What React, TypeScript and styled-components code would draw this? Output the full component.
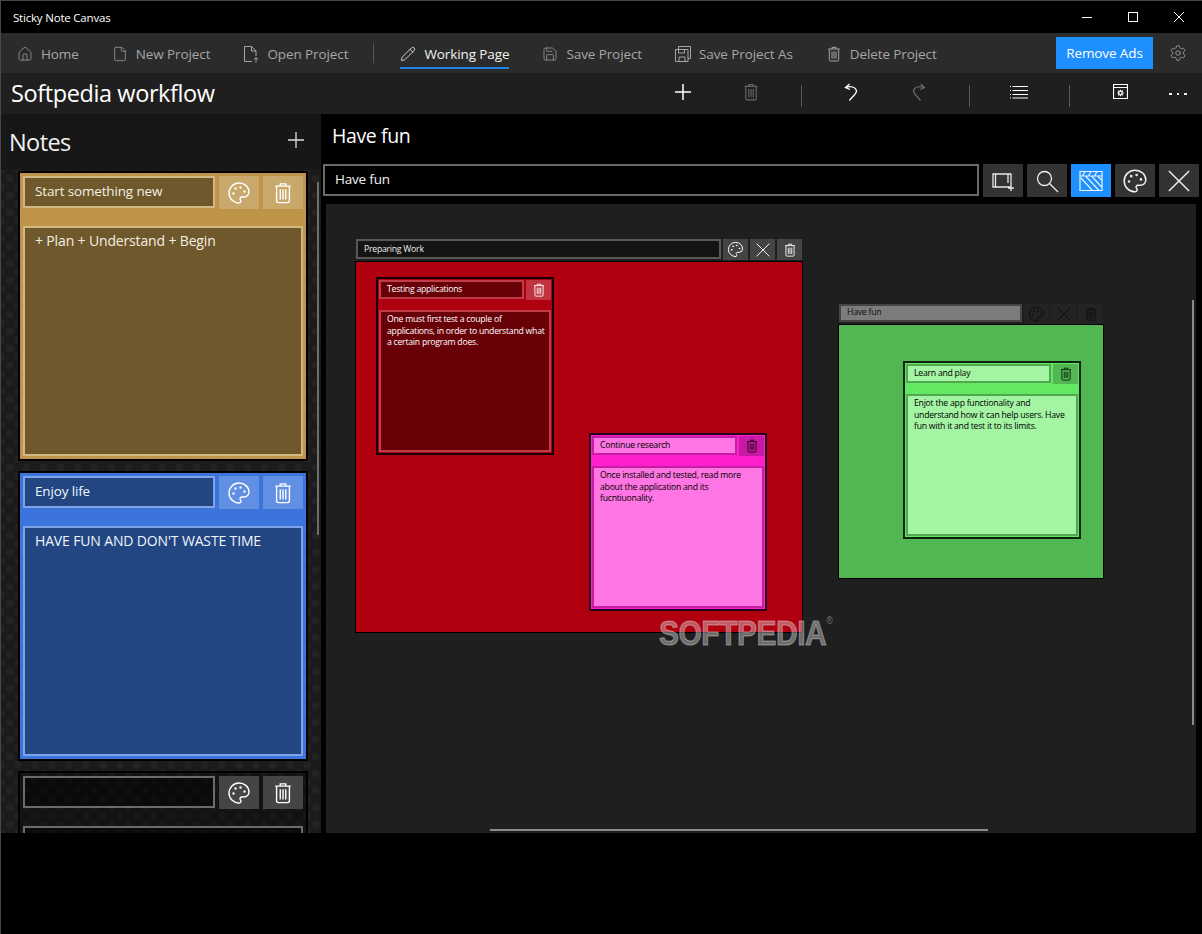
import * as React from 'react'
import styled, { createGlobalStyle } from 'styled-components'
import { Palette, Pencil, Save, Settings, File, Home } from 'lucide-react'

interface Tone {
  card: string
  field: string
  line: string
  button: string
  text: string
  icon: string
}

const TONES: Record<string, Tone> = {
  gold: { card: '#bd9448', field: '#6f582c', line: '#d3b884', button: '#c9a86c', text: '#f4efe4', icon: '#fff' },
  blue: { card: '#3b75db', field: '#224682', line: '#7ea3e8', button: '#608fe3', text: '#f0f4fb', icon: '#fff' },
  empty: { card: 'rgba(0, 0, 0, 0.3)', field: 'rgba(0, 0, 0, 0.4)', line: '#6b6b6b', button: '#454545', text: '#fff', icon: '#fff' },
  red: { card: '#b00010', field: '#680008', line: '#c03c48', button: '#c03440', text: '#fff', icon: '#fff' },
  pink: { card: '#ff1fcb', field: '#ff75e3', line: '#c71da2', button: '#c718a6', text: '#000', icon: '#1c0716' },
  green: { card: '#62e862', field: '#a3f4a3', line: '#52a852', button: '#52b752', text: '#000', icon: '#0a1f0a' },
}

const TrashIcon: React.FC<{ size?: number; color?: string }> = ({ size = 24, color = 'currentColor' }) => (
  <svg width={size} height={size} viewBox="0 0 24 24" fill="none" stroke={color} strokeWidth="1.5">
    <path d="M3.500 4.500h17M9 4.500V2h6v2.500" />
    <path d="M5 4.500V20.500a2 2 0 0 0 2 2h10a2 2 0 0 0 2-2V4.500" />
    <path d="M9 8v11M12 8v11M15 8v11" />
  </svg>
)

const PaletteIcon: React.FC<{ size?: number; color?: string }> = ({ size = 24, color = 'currentColor' }) => (
  <Palette size={size} color={color} strokeWidth={1.4} />
)

const CrossIcon: React.FC<{ size: number }> = ({ size }) => (
  <svg width={size} height={size} viewBox="0 0 24 24" fill="none" stroke="currentColor" strokeWidth="1.600">
    <path d="M1 1l22 22M23 1L1 23" />
  </svg>
)

const Note: React.FC<{ tone: Tone; title?: string; body?: string; small?: boolean; x?: number; y?: number }> = ({
  tone,
  title,
  body,
  small,
  x,
  y,
}) => {
  if (small) {
    return (
      <SmallCard $tone={tone} $x={x} $y={y}>
        <SmallHead>
          <SmallTitle $tone={tone}>{title}</SmallTitle>
          <SmallButton $tone={tone}>
            <TrashIcon size={14} color={tone.icon} />
          </SmallButton>
        </SmallHead>
        <SmallBody $tone={tone}>{body}</SmallBody>
      </SmallCard>
    )
  }
  return (
    <Card $tone={tone}>
      <CardHead>
        <CardTitle $tone={tone}>{title}</CardTitle>
        <CardButton $tone={tone}>
          <PaletteIcon size={24} color={tone.icon} />
        </CardButton>
        <CardButton $tone={tone}>
          <TrashIcon size={22} color={tone.icon} />
        </CardButton>
      </CardHead>
      <CardBody $tone={tone}>{body}</CardBody>
    </Card>
  )
}

const App: React.FC = () => (
  <Page>
    <GlobalStyle />
    <TitleBar>
      <AppName>Sticky Note Canvas</AppName>
      <WindowButtons>
        <WindowButton>
          <svg width="12" height="12" viewBox="0 0 12 12" stroke="#fff" fill="none"><path d="M1 6.500h10" /></svg>
        </WindowButton>
        <WindowButton>
          <svg width="12" height="12" viewBox="0 0 12 12" stroke="#fff" fill="none"><rect x="1.500" y="1.500" width="9" height="9" /></svg>
        </WindowButton>
        <WindowButton>
          <svg width="12" height="12" viewBox="0 0 12 12" stroke="#fff" fill="none"><path d="M1 1l10 10M11 1L1 11" /></svg>
        </WindowButton>
      </WindowButtons>
    </TitleBar>

    <NavBar>
      <NavItem><Home size={16} strokeWidth={1.1} />Home</NavItem>
      <NavItem><File size={16} strokeWidth={1.1} />New Project</NavItem>
      <NavItem>
        <svg width="16" height="18" viewBox="0 0 16 18" fill="none" stroke="currentColor">
          <path d="M9 16.500H1.500v-15h7l4.500 4.500v5M8.500 1.500V6H13M13 17.500v-5M11 14.500l2-2 2 2" />
        </svg>
        Open Project
      </NavItem>
      <NavDivider />
      <NavItem $active><Pencil size={16} strokeWidth={1.2} />Working Page</NavItem>
      <NavItem><Save size={16} strokeWidth={1.1} />Save Project</NavItem>
      <NavItem>
        <svg width="16" height="16" viewBox="0 0 16 16" fill="none" stroke="currentColor">
          <path d="M3.500 3V.500h12v12H13M.500 3.500h12.500v12H.500zM4 15.500V11h6v4.500M3.500 3.500v3.500h6V3.500" />
        </svg>
        Save Project As
      </NavItem>
      <NavItem><TrashIcon size={16} />Delete Project</NavItem>
      <RemoveAds>Remove Ads</RemoveAds>
      <GearButton><Settings size={18} strokeWidth={1.1} /></GearButton>
    </NavBar>

    <CommandBar>
      <ProjectName>Softpedia workflow</ProjectName>
      <CommandCell>
        <svg width="18" height="18" viewBox="0 0 18 18" stroke="#fff" strokeWidth="1.500"><path d="M9 1v16M1 9h16" /></svg>
      </CommandCell>
      <CommandCell $dim><TrashIcon size={18} /></CommandCell>
      <CommandDivider />
      <CommandCell>
        <svg width="14" height="18" viewBox="0 0 14 18" fill="none" stroke="#fff" strokeWidth="1.300">
          <path d="M5.500 1L1.500 4.500l4.500 2M2 4.500C6 2.500 12 4 12.500 8c.3 2.500-4.500 6-7 9.500" />
        </svg>
      </CommandCell>
      <CommandCell $dim>
        <svg width="14" height="18" viewBox="0 0 14 18" fill="none" stroke="currentColor" strokeWidth="1.300">
          <path d="M8.500 1l4 3.500-4.500 2M12 4.500C8 2.500 2 4 1.500 8c-.3 2.500 4.500 6 7 9.500" />
        </svg>
      </CommandCell>
      <CommandDivider />
      <CommandCell>
        <svg width="18" height="14" viewBox="0 0 18 14" fill="none" stroke="#fff">
          <path d="M2.500 1.500H18M2.500 5.500H18M2.500 9.500H18M2.500 13H18M0 1.500h1M0 5.500h1M0 9.500h1M0 13h1" />
        </svg>
      </CommandCell>
      <CommandDivider $last />
      <CommandCell>
        <svg width="15" height="15" viewBox="0 0 15 15" fill="none" stroke="#fff">
          <path d="M.500.500h14v14H.500z" strokeWidth="1.200" />
          <path d="M.500 3.500h14" />
          <circle cx="7.500" cy="9" r="1.800" strokeWidth="1.300" />
          <path d="M7.500 5.800v1.200M7.500 11v1.200M4.300 9h1.200M9.500 9h1.200M5.200 6.700l.9.9M8.900 10.400l.9.900M9.800 6.700l-.9.900M6.100 10.400l-.9.900" strokeWidth="1.100" />
        </svg>
      </CommandCell>
      <MoreDots><i /><i /><i /></MoreDots>
    </CommandBar>

    <Workspace>
      <Sidebar>
        <SidebarHead>
          <SidebarTitle>Notes</SidebarTitle>
          <SidebarAdd>
            <svg width="16" height="16" viewBox="0 0 16 16" stroke="#ddd" strokeWidth="1.300"><path d="M8 0v16M0 8h16" /></svg>
          </SidebarAdd>
        </SidebarHead>
        <NoteList>
          <Note tone={TONES.gold} title="Start something new" body="+ Plan + Understand + Begin" />
          <Note tone={TONES.blue} title="Enjoy life" body="HAVE FUN AND DON'T WASTE TIME" />
          <Note tone={TONES.empty} />
          <ListThumb />
        </NoteList>
      </Sidebar>

      <Main>
        <MainTitle>Have fun</MainTitle>
        <SearchRow>
          <CanvasName>Have fun</CanvasName>
          <ToolButton>
            <svg width="24" height="22" viewBox="0 0 24 22" fill="none" stroke="#e8e8e8" strokeWidth="1.300">
              <path d="M2 4h18v13H2zM4.500 4v13M17 4v9M20 15v6M17 18h6" />
            </svg>
          </ToolButton>
          <ToolButton>
            <svg width="24" height="24" viewBox="0 0 24 24" fill="none" stroke="#eee" strokeWidth="1.300">
              <circle cx="9.500" cy="9.500" r="7" />
              <path d="M14.500 14.500L23 23" />
            </svg>
          </ToolButton>
          <ToolButton $active>
            <svg width="26" height="22" viewBox="0 0 26 22" fill="none" stroke="#eaf4ff" strokeWidth="1.200">
              <path d="M2 1.500h22v19H2zM2 6h22M7 1.500L4.500 6M13 1.500L10.500 6M19 1.500L16.500 6M3 8l11 12M8 6.500l13 14M14 6.500l10 11M20 6.500l4 4" />
            </svg>
          </ToolButton>
          <ToolButton><PaletteIcon size={26} color="#eee" /></ToolButton>
          <ToolButton><CrossIcon size={22} /></ToolButton>
        </SearchRow>

        <Canvas>
          <Group $x={29} $y={35} $w={448}>
            <GroupHead>
              <GroupTitle>Preparing Work</GroupTitle>
              <GroupButton><PaletteIcon size={17} /></GroupButton>
              <GroupButton><CrossIcon size={14} /></GroupButton>
              <GroupButton><TrashIcon size={14} /></GroupButton>
            </GroupHead>
            <GroupPanel $color="#b00010" $h={372}>
              <Note small x={21} y={16} tone={TONES.red} title="Testing applications"
                body="One must first test a couple of applications, in order to understand what a certain program does." />
              <Note small x={234} y={172} tone={TONES.pink} title="Continue research"
                body="Once installed and tested, read more about the application and its fucntiuonality." />
            </GroupPanel>
          </Group>

          <Group $x={512} $y={100} $w={266} $faded>
            <GroupHead $short>
              <GroupTitle $short>Have fun</GroupTitle>
              <GroupButton><PaletteIcon size={17} /></GroupButton>
              <GroupButton><CrossIcon size={14} /></GroupButton>
              <GroupButton><TrashIcon size={14} /></GroupButton>
            </GroupHead>
            <GroupPanel $color="#52b752" $h={255}>
              <Note small x={65} y={37} tone={TONES.green} title="Learn and play"
                body="Enjot the app functionality and understand how it can help users. Have fun with it and test it to its limits." />
            </GroupPanel>
          </Group>

          <VerticalThumb />
          <HorizontalThumb />
          <Watermark>SOFTPEDIA<sup>®</sup></Watermark>
        </Canvas>
      </Main>
    </Workspace>
    <Footer />
  </Page>
)

export default App

const GlobalStyle = createGlobalStyle`
  html, body {
    margin: 0;
    padding: 0;
    background: #000;
  }
  * {
    box-sizing: border-box;
  }
`

const Page = styled.div`
  width: 1202px;
  height: 934px;
  display: flex;
  flex-direction: column;
  overflow: hidden;
  background: #000;
  border-top: 1px solid #484848;
  border-left: 1px solid #484848;
  font-family: 'Open Sans', 'Liberation Sans', sans-serif;
  color: #fff;
`

const TitleBar = styled.div`
  height: 32px;
  flex: none;
  display: flex;
  align-items: center;
  justify-content: space-between;
  padding-left: 12px;
`

const AppName = styled.div`
  font-size: 11.5px;
  letter-spacing: -0.2px;
`

const WindowButtons = styled.div`
  display: flex;
`

const WindowButton = styled.div`
  width: 46px;
  height: 32px;
  display: flex;
  align-items: center;
  justify-content: center;
`

const NavBar = styled.div`
  height: 40px;
  flex: none;
  display: flex;
  align-items: flex-start;
  padding-left: 16px;
  gap: 33px;
  background: #2b2b2b;
`

const NavItem = styled.div<{ $active?: boolean }>`
  height: 36px;
  padding-top: 7px;
  display: flex;
  align-items: center;
  gap: 8px;
  font-size: 13.5px;
  letter-spacing: -0.1px;
  white-space: nowrap;
  color: ${(p) => (p.$active ? '#f2f2f2' : '#a6a6a6')};
  border-bottom: 2px solid ${(p) => (p.$active ? '#1f86e8' : 'transparent')};
  svg {
    flex: none;
  }
`

const NavDivider = styled.div`
  width: 1px;
  height: 20px;
  margin: 10px -7px 0 -8px;
  background: #555;
`

const RemoveAds = styled.div`
  width: 97px;
  height: 32px;
  margin: 4px -33px 0 auto;
  display: flex;
  align-items: center;
  justify-content: center;
  background: #1e8fff;
  font-size: 13.5px;
  letter-spacing: -0.1px;
`

const GearButton = styled.div`
  width: 49px;
  height: 40px;
  display: flex;
  align-items: center;
  justify-content: center;
  color: #a6a6a6;
`

const CommandBar = styled.div`
  height: 41px;
  flex: none;
  display: flex;
  align-items: center;
  padding-left: 10px;
  background: #1f1f1f;
`

const ProjectName = styled.div`
  flex: 1;
  padding-bottom: 2px;
  font-size: 23.5px;
  letter-spacing: -0.4px;
`

const CommandCell = styled.div<{ $dim?: boolean }>`
  width: 68px;
  padding-bottom: 4px;
  display: flex;
  justify-content: center;
  color: ${(p) => (p.$dim ? '#686868' : '#fff')};
`

const CommandDivider = styled.div<{ $last?: boolean }>`
  width: 1px;
  height: 22px;
  margin: 4px ${(p) => (p.$last ? 16 : 15)}px 0 16px;
  background: #5a5a5a;
`

const MoreDots = styled.div`
  width: 48px;
  padding-top: 1px;
  display: flex;
  justify-content: center;
  gap: 5px;
  i {
    width: 2.500px;
    height: 2.500px;
    background: #eee;
  }
`

const Workspace = styled.div`
  height: 719px;
  flex: none;
  display: flex;
`

const Sidebar = styled.div`
  width: 320px;
  flex: none;
  display: flex;
  flex-direction: column;
  background: #171717;
`

const SidebarHead = styled.div`
  height: 56px;
  flex: none;
  display: flex;
  align-items: center;
  justify-content: space-between;
  padding: 0 17px 0 8px;
`

const SidebarTitle = styled.div`
  font-size: 23.5px;
  letter-spacing: -0.6px;
  color: #f0f0f0;
`

const SidebarAdd = styled.div`
  display: flex;
  margin-top: -4px;
`

const NoteList = styled.div`
  position: relative;
  flex: 1;
  min-height: 0;
  overflow: hidden;
  padding: 1px 0 0 17px;
  display: flex;
  flex-direction: column;
  gap: 10px;
  background-color: #1b1b1b;
  background-image: radial-gradient(circle, #232323 3.5px, transparent 4px),
    radial-gradient(circle, #232323 3.5px, transparent 4px);
  background-size: 17px 17px;
  background-position: 0 0, 8.500px 8.500px;
`

const ListThumb = styled.div`
  position: absolute;
  top: 12px;
  left: 316px;
  width: 2px;
  height: 353px;
  background: #6e6e6e;
`

const Card = styled.div<{ $tone: Tone }>`
  width: 290px;
  height: 290px;
  flex: none;
  padding: 3px;
  display: flex;
  flex-direction: column;
  gap: 17px;
  border: 2px solid #000;
  background: ${(p) => p.$tone.card};
`

const CardHead = styled.div`
  display: flex;
  gap: 4px;
`

const CardTitle = styled.div<{ $tone: Tone }>`
  width: 192px;
  height: 32px;
  padding: 0 0 2px 10px;
  display: flex;
  align-items: center;
  font-size: 13.5px;
  letter-spacing: -0.15px;
  border: 2px solid ${(p) => p.$tone.line};
  background: ${(p) => p.$tone.field};
  color: ${(p) => p.$tone.text};
`

const CardButton = styled.div<{ $tone: Tone }>`
  width: 40px;
  height: 33px;
  display: flex;
  align-items: center;
  justify-content: center;
  background: ${(p) => p.$tone.button};
`

const CardBody = styled.div<{ $tone: Tone }>`
  flex: 1;
  min-height: 230px;
  padding: 3px 10px;
  font-size: 14px;
  letter-spacing: -0.15px;
  border: 2px solid ${(p) => p.$tone.line};
  background: ${(p) => p.$tone.field};
  color: ${(p) => p.$tone.text};
`

const Main = styled.div`
  flex: 1;
  min-width: 0;
  display: flex;
  flex-direction: column;
  padding: 0 3px 0 2px;
`

const MainTitle = styled.div`
  height: 50px;
  flex: none;
  display: flex;
  align-items: center;
  padding: 0 0 7px 9px;
  font-size: 19.5px;
  letter-spacing: -0.4px;
`

const SearchRow = styled.div`
  height: 33px;
  flex: none;
  display: flex;
  gap: 4px;
`

const CanvasName = styled.div`
  width: 656px;
  height: 32px;
  display: flex;
  align-items: center;
  padding: 0 0 2px 10px;
  font-size: 13.5px;
  letter-spacing: -0.2px;
  border: 2px solid #6a6a6a;
  background: #000;
  color: #f2f2f2;
`

const ToolButton = styled.div<{ $active?: boolean }>`
  width: 40px;
  display: flex;
  align-items: center;
  justify-content: center;
  color: #eee;
  background: ${(p) => (p.$active ? '#1e8fff' : '#333')};
`

const Canvas = styled.div`
  position: relative;
  flex: 1;
  width: 870px;
  margin: 7px 0 0 3px;
  overflow: hidden;
  background: #1f1f1f;
`

const Group = styled.div<{ $x: number; $y: number; $w: number; $faded?: boolean }>`
  position: absolute;
  left: ${(p) => p.$x}px;
  top: ${(p) => p.$y}px;
  width: ${(p) => p.$w}px;
  --group-field: ${(p) => (p.$faded ? '#7c7c7c' : '#141414')};
  --group-line: ${(p) => (p.$faded ? '#444' : '#585858')};
  --group-text: ${(p) => (p.$faded ? '#111' : '#eee')};
  --group-button: ${(p) => (p.$faded ? '#232323' : '#444')};
  --group-icon: ${(p) => (p.$faded ? '#0c0c0c' : '#fff')};
`

const GroupHead = styled.div<{ $short?: boolean }>`
  height: ${(p) => (p.$short ? 20 : 21)}px;
  margin-bottom: ${(p) => (p.$short ? 0 : 1)}px;
  padding: 0 1px;
  display: flex;
  gap: 2px;
`

const GroupTitle = styled.div<{ $short?: boolean }>`
  flex: 1;
  min-width: 0;
  height: ${(p) => (p.$short ? 18 : 20)}px;
  display: flex;
  align-items: center;
  padding: 0 0 ${(p) => (p.$short ? 2 : 1)}px 6px;
  font-size: 8.700px;
  letter-spacing: -0.25px;
  border: 2px solid var(--group-line);
  background: var(--group-field);
  color: var(--group-text);
`

const GroupButton = styled.div`
  width: 25px;
  display: flex;
  align-items: center;
  justify-content: center;
  background: var(--group-button);
  color: var(--group-icon);
`

const GroupPanel = styled.div<{ $color: string; $h: number }>`
  position: relative;
  height: ${(p) => p.$h}px;
  background: ${(p) => p.$color};
  border: 1px solid #000;
`

const SmallCard = styled.div<{ $tone: Tone; $x?: number; $y?: number }>`
  position: absolute;
  left: ${(p) => (p.$x ?? 0) - 1}px;
  top: ${(p) => (p.$y ?? 0) - 1}px;
  width: 178px;
  height: 178px;
  padding: 1px;
  display: flex;
  flex-direction: column;
  gap: 10px;
  border: 2px solid rgba(0, 0, 0, 0.85);
  background: ${(p) => p.$tone.card};
`

const SmallHead = styled.div`
  display: flex;
  gap: 2px;
`

const SmallTitle = styled.div<{ $tone: Tone }>`
  width: 145px;
  height: 19px;
  display: flex;
  align-items: center;
  padding: 0 0 2px 6px;
  font-size: 8.700px;
  letter-spacing: -0.25px;
  border: 2px solid ${(p) => p.$tone.line};
  background: ${(p) => p.$tone.field};
  color: ${(p) => p.$tone.text};
`

const SmallButton = styled.div<{ $tone: Tone }>`
  width: 25px;
  height: 20px;
  display: flex;
  align-items: center;
  justify-content: center;
  background: ${(p) => p.$tone.button};
`

const SmallBody = styled.div<{ $tone: Tone }>`
  height: 142px;
  padding: 2px 3px 0 6px;
  font-size: 8.700px;
  line-height: 11.500px;
  letter-spacing: -0.25px;
  border: 2px solid ${(p) => p.$tone.line};
  background: ${(p) => p.$tone.field};
  color: ${(p) => p.$tone.text};
`

const VerticalThumb = styled.div`
  position: absolute;
  top: 96px;
  right: 2px;
  width: 2px;
  height: 425px;
  background: #8a8a8a;
`

const HorizontalThumb = styled.div`
  position: absolute;
  bottom: 2px;
  left: 164px;
  width: 498px;
  height: 2px;
  background: #8a8a8a;
`

const Watermark = styled.div`
  position: absolute;
  left: 333px;
  top: 412px;
  font-family: 'Liberation Sans', sans-serif;
  font-weight: 700;
  font-size: 30px;
  letter-spacing: -0.5px;
  color: rgba(225, 225, 225, 0.42);
  -webkit-text-stroke: 0.9px rgba(225, 225, 225, 0.42);
  transform: scaleY(1.18);
  sup {
    font-size: 9px;
    font-weight: 400;
    vertical-align: 18px;
    line-height: 0;
    -webkit-text-stroke: 0;
  }
`

const Footer = styled.div`
  flex: 1;
  background: #000;
`
